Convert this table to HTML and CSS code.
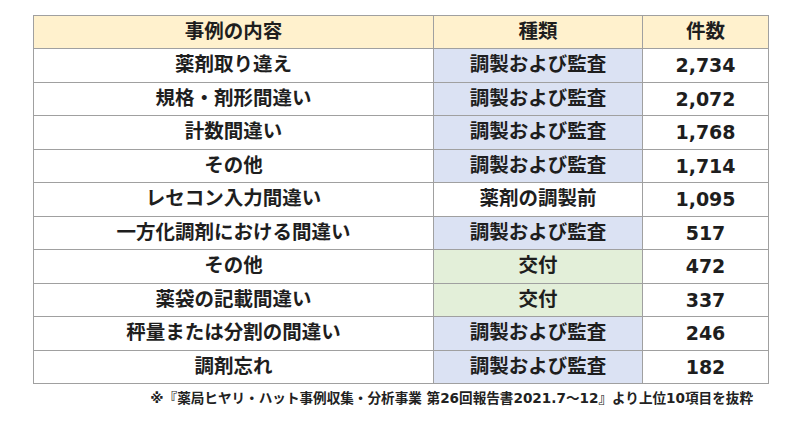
FILE: index.html
```html
<!DOCTYPE html>
<html lang="ja">
<head>
<meta charset="utf-8">
<link rel="stylesheet" href="styles.css">
</head>
<body>
<div class="wrap">
  <table class="cases">
    <colgroup>
      <col class="c1"><col class="c2"><col class="c3">
    </colgroup>
    <thead>
      <tr><th>事例の内容</th><th>種類</th><th>件数</th></tr>
    </thead>
    <tbody>
      <tr><td>薬剤取り違え</td><td class="blue">調製および監査</td><td class="num">2,734</td></tr>
      <tr><td>規格・剤形間違い</td><td class="blue">調製および監査</td><td class="num">2,072</td></tr>
      <tr><td>計数間違い</td><td class="blue">調製および監査</td><td class="num">1,768</td></tr>
      <tr><td>その他</td><td class="blue">調製および監査</td><td class="num">1,714</td></tr>
      <tr><td>レセコン入力間違い</td><td>薬剤の調製前</td><td class="num">1,095</td></tr>
      <tr><td>一方化調剤における間違い</td><td class="blue">調製および監査</td><td class="num">517</td></tr>
      <tr><td>その他</td><td class="green">交付</td><td class="num">472</td></tr>
      <tr><td>薬袋の記載間違い</td><td class="green">交付</td><td class="num">337</td></tr>
      <tr><td>秤量または分割の間違い</td><td class="blue">調製および監査</td><td class="num">246</td></tr>
      <tr><td>調剤忘れ</td><td class="blue">調製および監査</td><td class="num">182</td></tr>
    </tbody>
  </table>
  <p class="note">※『薬局ヒヤリ・ハット事例収集・分析事業 第26回報告書2021.7～12』より上位10項目を抜粋</p>
</div>
</body>
</html>
```

FILE: styles.css
```css
html, body {
  margin: 0;
  padding: 0;
  background: #ffffff;
}
body {
  font-family: "DejaVu Sans", "Noto Sans CJK JP", sans-serif;
  color: #1e1e1e;
  width: 800px;
  height: 426px;
  overflow: hidden;
}
.wrap {
  padding: 15px 0 0 33px;
  width: 735px;
}
.cases {
  border-collapse: collapse;
  table-layout: fixed;
  width: 735px;
}
.c1 { width: 400px; }
.c2 { width: 209px; }
.c3 { width: 126px; }
.cases th,
.cases td {
  border: 1px solid #a0a0a0;
  height: 32px;
  padding: 0;
  text-align: center;
  vertical-align: middle;
  font-size: 19.5px;
  font-weight: bold;
  line-height: 22px;
  white-space: nowrap;
}
.cases th {
  background: #fff1cd;
}
.cases td {
  height: 32.5px;
}
.cases td.blue { background: #dbe2f3; }
.cases td.green { background: #e3efd9; }
.cases td.num { font-size: 19px; }
.note {
  margin: 0;
  padding: 4px 15px 0 0;
  text-align: right;
  font-size: 13.6px;
  font-weight: bold;
  line-height: 20px;
  color: #222;
  white-space: nowrap;
}
```
